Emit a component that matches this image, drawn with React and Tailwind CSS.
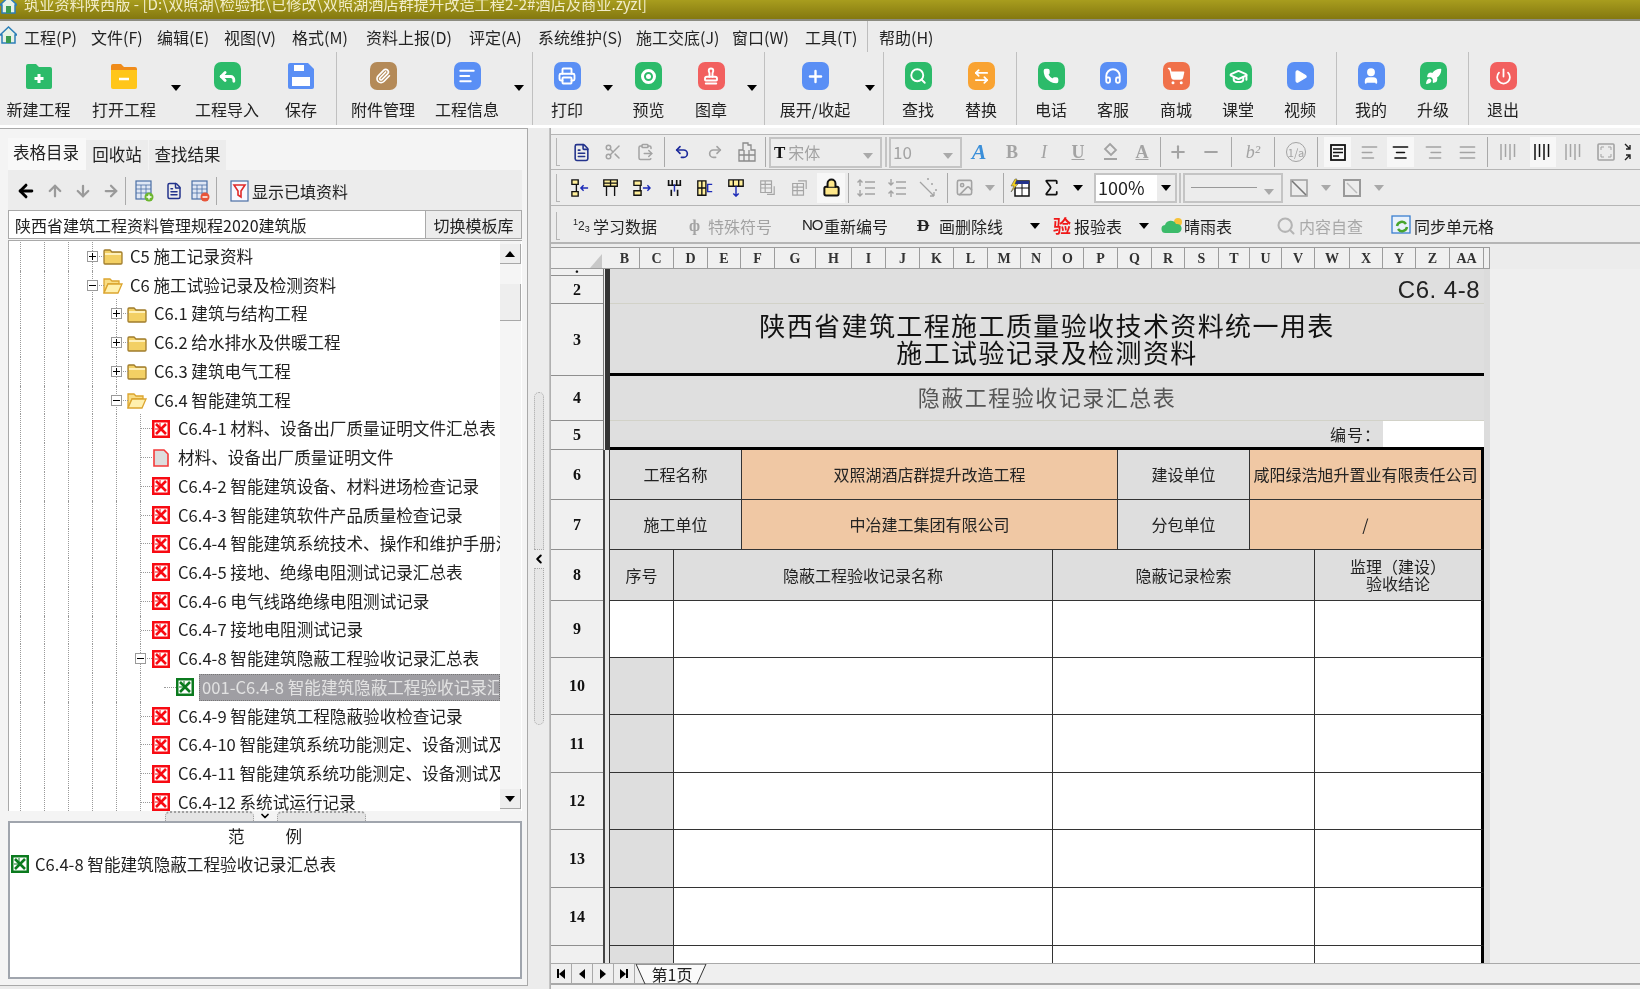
import React from "react";
import {
  ArrowLeftRight,
  ArrowDown,
  ArrowLeft,
  ArrowRight,
  ArrowUp,
  AlignJustify,
  ChevronDown,
  ChevronLeft,
  ClipboardPaste,
  FileText,
  GraduationCap,
  Headphones,
  Paperclip,
  Phone,
  Play,
  Plus,
  Power,
  Printer,
  Redo2,
  Reply,
  Rocket,
  Scissors,
  Search,
  ShoppingCart,
  Stamp,
  Undo2,
  User,
  Minus,
  AlignLeft,
  AlignCenter,
  AlignRight,
  Sigma,
  Lock,
  Image,
} from "lucide-react";

const Caret = ({ gray }) => (
  <span
    className={`inline-block border-x-[5px] border-t-[6px] border-x-transparent ${
      gray ? "border-t-[#a9a9a9]" : "border-t-black"
    }`}
  ></span>
);

const Tile = ({ color, children }) => (
  <div className={`w-[27px] h-[28px] rounded-[7px] flex items-center justify-center text-white ${color}`}>
    {children}
  </div>
);

const FolderTile = ({ top, body, children }) => (
  <svg width="28" height="28" viewBox="0 0 28 28">
    <path d="M1 4a2 2 0 0 1 2-2h8l3 3h11a2 2 0 0 1 2 2v4H1z" fill={top} />
    <path d="M1 8h26v17a2 2 0 0 1-2 2H3a2 2 0 0 1-2-2z" fill={body} />
    {children}
  </svg>
);

const Floppy = () => (
  <svg width="28" height="28" viewBox="0 0 28 28">
    <path d="M3 1h18l6 6v18a2 2 0 0 1-2 2H3a2 2 0 0 1-2-2V3a2 2 0 0 1 2-2z" fill="#5a8ff5" />
    <rect x="7" y="3" width="10" height="6" fill="#fff" />
    <rect x="5" y="15" width="18" height="9" fill="#fff" />
  </svg>
);

const mainTools = [
  { label: "新建工程", w: "w-[77px]", icon: <FolderTile top="#2cbb6a" body="#2cbb6a"><path d="M14 12v9M9.500 16.500h9" stroke="#fff" strokeWidth="3" /></FolderTile> },
  { label: "打开工程", w: "w-[94px]", icon: <FolderTile top="#f08c1a" body="#ffc61a"><path d="M9 17h10" stroke="#fff" strokeWidth="2.500" /></FolderTile> },
  { caret: "w-[10px]" },
  { label: "工程导入", w: "w-[92px]", icon: <Tile color="bg-[#2cbb6a]"><Reply size={19} strokeWidth={3.500} /></Tile> },
  { label: "保存", w: "w-[56px]", icon: <Floppy /> },
  { sep: "ml-[7px]" },
  { label: "附件管理", w: "w-[92px]", icon: <Tile color="bg-[#b48a58]"><Paperclip size={16} strokeWidth={2.500} /></Tile> },
  { label: "工程信息", w: "w-[76px]", icon: <Tile color="bg-[#5a8ff5]"><AlignLeft size={18} strokeWidth={2.500} /></Tile> },
  { caret: "w-[10px] ml-[9px]" },
  { sep: "ml-[8px]" },
  { label: "打印", w: "w-[68px]", icon: <Tile color="bg-[#5a8ff5]"><Printer size={18} strokeWidth={2.500} /></Tile> },
  { caret: "w-[14px]" },
  { label: "预览", w: "w-[67px]", icon: <Tile color="bg-[#2cbb6a]"><span className="w-[15px] h-[15px] rounded-full border-[3px] border-white flex items-center justify-center"><span className="w-[5px] h-[5px] rounded-full bg-white"></span></span></Tile> },
  { label: "图章", w: "w-[58px]", icon: <Tile color="bg-[#f2605f]"><Stamp size={18} strokeWidth={2.500} /></Tile> },
  { caret: "w-[24px]" },
  { sep: "" },
  { label: "展开/收起", w: "w-[100px]", icon: <Tile color="bg-[#5a8ff5]"><Plus size={19} strokeWidth={3} /></Tile> },
  { caret: "w-[10px]" },
  { sep: "ml-[8px]" },
  { label: "查找", w: "w-[68px]", icon: <Tile color="bg-[#2cbb6a]"><Search size={18} strokeWidth={2.500} /></Tile> },
  { label: "替换", w: "w-[58px]", icon: <Tile color="bg-[#f9a332]"><ArrowLeftRight size={17} strokeWidth={2.500} /></Tile> },
  { sep: "ml-[6px]" },
  { label: "电话", w: "w-[68px]", icon: <Tile color="bg-[#2cbb6a]"><Phone size={16} fill="#fff" strokeWidth={2} /></Tile> },
  { label: "客服", w: "w-[56px]", icon: <Tile color="bg-[#5a8ff5]"><Headphones size={18} strokeWidth={2.500} /></Tile> },
  { label: "商城", w: "w-[70px]", icon: <Tile color="bg-[#f0714a]"><ShoppingCart size={18} fill="#fff" strokeWidth={2} /></Tile> },
  { label: "课堂", w: "w-[54px]", icon: <Tile color="bg-[#2cbb6a]"><GraduationCap size={19} strokeWidth={2.500} /></Tile> },
  { label: "视频", w: "w-[70px]", icon: <Tile color="bg-[#5a8ff5]"><Play size={15} fill="#fff" strokeWidth={2} /></Tile> },
  { sep: "ml-[1px]" },
  { label: "我的", w: "w-[68px]", icon: <Tile color="bg-[#5a8ff5]"><User size={18} fill="#fff" strokeWidth={2.500} /></Tile> },
  { label: "升级", w: "w-[56px]", icon: <Tile color="bg-[#2cbb6a]"><Rocket size={17} fill="#fff" strokeWidth={2} /></Tile> },
  { sep: "ml-[7px]" },
  { label: "退出", w: "w-[68px]", icon: <Tile color="bg-[#f2605f]"><Power size={17} strokeWidth={2.500} /></Tile> },
];

const menus = [
  ["工程(P)", "w-[67px]"],
  ["文件(F)", "w-[66px]"],
  ["编辑(E)", "w-[67px]"],
  ["视图(V)", "w-[68px]"],
  ["格式(M)", "w-[74px]"],
  ["资料上报(D)", "w-[103px]"],
  ["评定(A)", "w-[69px]"],
  ["系统维护(S)", "w-[98px]"],
  ["施工交底(J)", "w-[96px]"],
  ["窗口(W)", "w-[73px]"],
  ["工具(T)", "w-[62px]"],
];

const House = () => (
  <svg width="17" height="18" viewBox="0 0 17 18">
    <path d="M8.500 1L0 9h2v8h13V9h2z" fill="#e8f2e6" stroke="#2c7fb8" strokeWidth="1.500" />
    <rect x="6" y="10" width="5" height="7" fill="#3a9a50" />
  </svg>
);

const TitleBar = () => (
  <div className="h-[21px] shrink-0 overflow-hidden border-b-2 border-[#8b8b80] bg-gradient-to-b from-[#a89d1e] to-[#84780f] flex items-start">
    <div className="w-[24px] -mt-[4px] shrink-0"><House /></div>
    <span className="-mt-[9px] text-[15.2px] leading-[24px] text-[#f1ecc8] whitespace-nowrap">
      筑业资料陕西版 - [D:\双照湖\检验批\已修改\双照湖酒店群提升改造工程2-2#酒店及商业.zyzl]
    </span>
  </div>
);

const MenuBar = () => (
  <div className="h-[31px] shrink-0 flex items-center bg-[#ececec] text-[16px] text-[#222]">
    <div className="w-[24px] shrink-0 -mt-[4px]"><House /></div>
    {menus.map(([t, w]) => (
      <div key={t} className={`${w} shrink-0 whitespace-nowrap`}>{t}</div>
    ))}
    <div className="w-px h-full bg-[#bdbdbd]"></div>
    <div className="ml-[11px] whitespace-nowrap">帮助(H)</div>
  </div>
);

const MainToolbar = () => (
  <div className="h-[73px] shrink-0 flex bg-[#ececec] text-[16px] text-[#222]">
    {mainTools.map((t, i) => {
      if (t.sep !== undefined) return <div key={i} className={`w-px h-full bg-[#c0c0c0] shrink-0 ${t.sep}`}></div>;
      if (t.caret) return <div key={i} className={`${t.caret} shrink-0 flex justify-center items-start pt-[33px]`}><Caret /></div>;
      return (
        <div key={i} className={`${t.w} shrink-0 flex flex-col items-center pt-[10px]`}>
          <div className="h-[28px] flex items-center">{t.icon}</div>
          <div className="mt-[9px] leading-[20px] whitespace-nowrap">{t.label}</div>
        </div>
      );
    })}
  </div>
);

/* small file icons of the tree */
const XlsIcon = ({ green }) => (
  <svg width="18" height="18" viewBox="0 0 18 18" className="shrink-0">
    <rect width="18" height="18" fill={green ? "#0b7a1e" : "#f80a12"} />
    <rect x="2.500" y="2.500" width="13" height="13" fill="#fff" />
    <path d="M4 4l10 10M14 4L4 14" stroke={green ? "#0b7a1e" : "#f80a12"} strokeWidth="2.600" />
    <path d="M3 9h5V3" fill="none" stroke={green ? "#0b7a1e" : "#f80a12"} strokeWidth="1" />
  </svg>
);

const PageIcon = () => (
  <svg width="18" height="18" viewBox="0 0 18 18" className="shrink-0">
    <path d="M2 1h10l4 4v12H2z" fill="#ddd" stroke="#f43a3a" strokeWidth="1.600" />
  </svg>
);

const Folder = ({ open }) =>
  open ? (
    <svg width="20" height="18" viewBox="0 0 20 18" className="shrink-0">
      <path d="M1 3h6l2 2h7v3H5L1 17z" fill="#f9de86" stroke="#dca52f" strokeWidth="1.300" />
      <path d="M5 8h14l-4 9H1z" fill="#fff0ae" stroke="#dca52f" strokeWidth="1.300" />
    </svg>
  ) : (
    <svg width="20" height="18" viewBox="0 0 20 18" className="shrink-0">
      <path d="M1 4a1 1 0 0 1 1-1h5l2 2h9a1 1 0 0 1 1 1v10a1 1 0 0 1-1 1H2a1 1 0 0 1-1-1z" fill="#f3d064" stroke="#a07c2c" strokeWidth="1.300" />
      <path d="M2 7h16" stroke="#fff4c4" strokeWidth="1.800" />
    </svg>
  );

const Expander = ({ plus }) => (
  <span className="absolute -left-[6px] top-[9px] w-[11px] h-[11px] border border-[#9a9a9a] bg-white flex items-center justify-center">
    <span className="w-[7px] h-px bg-black"></span>
    {plus && <span className="absolute w-px h-[7px] bg-black"></span>}
  </span>
);

const treeRows = [
  { d: 3, exp: "plus", type: "folder", text: "C5 施工记录资料" },
  { d: 3, exp: "minus", type: "open", text: "C6 施工试验记录及检测资料" },
  { d: 4, exp: "plus", type: "folder", text: "C6.1 建筑与结构工程" },
  { d: 4, exp: "plus", type: "folder", text: "C6.2 给水排水及供暖工程" },
  { d: 4, exp: "plus", type: "folder", text: "C6.3 建筑电气工程" },
  { d: 4, exp: "minus", type: "open", text: "C6.4 智能建筑工程" },
  { d: 5, type: "x", text: "C6.4-1 材料、设备出厂质量证明文件汇总表" },
  { d: 5, type: "page", text: "材料、设备出厂质量证明文件" },
  { d: 5, type: "x", text: "C6.4-2 智能建筑设备、材料进场检查记录" },
  { d: 5, type: "x", text: "C6.4-3 智能建筑软件产品质量检查记录" },
  { d: 5, type: "x", text: "C6.4-4 智能建筑系统技术、操作和维护手册汇总表" },
  { d: 5, type: "x", text: "C6.4-5 接地、绝缘电阻测试记录汇总表" },
  { d: 5, type: "x", text: "C6.4-6 电气线路绝缘电阻测试记录" },
  { d: 5, type: "x", text: "C6.4-7 接地电阻测试记录" },
  { d: 5, exp: "minus", type: "x", text: "C6.4-8 智能建筑隐蔽工程验收记录汇总表" },
  { d: 6, type: "g", text: "001-C6.4-8 智能建筑隐蔽工程验收记录汇总表", selected: true },
  { d: 5, type: "x", text: "C6.4-9 智能建筑工程隐蔽验收检查记录" },
  { d: 5, type: "x", text: "C6.4-10 智能建筑系统功能测定、设备测试及调试记录" },
  { d: 5, type: "x", text: "C6.4-11 智能建筑系统功能测定、设备测试及调试记录" },
  { d: 5, type: "x", text: "C6.4-12 系统试运行记录" },
];

const TreeRow = ({ row }) => {
  const guides = Array.from({ length: row.d });
  return (
    <div className="h-[28.74px] flex items-stretch whitespace-nowrap text-[16.6px] text-[#222]">
      {guides.map((_, i) => (
        <span key={i} className="w-[24px] shrink-0 border-l border-dotted border-[#9a9a9a]"></span>
      ))}
      <span className={`relative w-[12px] shrink-0 ${row.selected ? "" : "border-l border-dotted border-[#9a9a9a]"}`}>
        <span className="absolute left-0 right-0 top-[14px] border-t border-dotted border-[#9a9a9a]"></span>
        {row.exp && <Expander plus={row.exp === "plus"} />}
      </span>
      <span className="w-[18px] shrink-0 flex items-center justify-center">
        {row.type === "folder" && <Folder />}
        {row.type === "open" && <Folder open />}
        {row.type === "x" && <XlsIcon />}
        {row.type === "g" && <XlsIcon green />}
        {row.type === "page" && <PageIcon />}
      </span>
      {row.selected ? (
        <span className="ml-[5px] flex-1 my-[1px] pl-[2px] flex items-center overflow-hidden bg-[#9f9ea3] text-[#e2e2e2] border border-dotted border-[#777]">
          {row.text}
        </span>
      ) : (
        <span className="ml-[8px] flex items-center">{row.text}</span>
      )}
    </div>
  );
};

const ScrollBtn = ({ up, cls }) => (
  <div className={`h-[20px] bg-[#eeeeee] border-b border-r border-[#a8a8a8] flex items-center justify-center ${cls}`}>
    <span className={`border-x-[5px] border-x-transparent ${up ? "border-b-[6px] border-b-black" : "border-t-[6px] border-t-black"}`}></span>
  </div>
);

const LeftToolIcon = ({ red, green }) => (
  <svg width="19" height="22" viewBox="0 0 19 22">
    <rect x="1" y="1" width="15" height="18" fill="#dfe7f4" stroke="#4a6fa5" strokeWidth="1.200" />
    <path d="M1 5h15M1 9h15M1 13h15M6 5v14M11 5v14" stroke="#4a6fa5" strokeWidth="0.800" />
    {green && <circle cx="14" cy="17" r="4.500" fill="#6cb62f" />}
    {green && <path d="M14 14.500v5M11.500 17h5" stroke="#fff" strokeWidth="1.300" />}
    {red && <circle cx="14" cy="17" r="4.500" fill="#e8553a" />}
    {red && <path d="M11.500 17h5" stroke="#fff" strokeWidth="1.500" />}
  </svg>
);

const LeftPanel = () => (
  <div className="w-[528px] shrink-0 h-[858px] border-t border-r border-b border-[#a9a9a9] bg-[#f4f4f4] pl-[8px] pr-[5px] pt-[9px] flex flex-col">
    {/* tabs */}
    <div className="h-[32px] flex items-stretch text-[16.5px] text-[#222] shrink-0">
      <div className="w-[78px] pb-[3px] pr-[2px] bg-[#f8f8f8] flex items-center justify-center">表格目录</div>
      <div className="w-[62px] mt-[2px] pb-[1px] bg-[#ececec] flex items-center justify-center">回收站</div>
      <div className="w-[77px] mt-[2px] pb-[1px] ml-px bg-[#ececec] flex items-center justify-center">查找结果</div>
    </div>
    {/* tree toolbar */}
    <div className="h-[40px] pt-[2px] bg-[#ececec] flex items-center text-[16px] text-[#222] shrink-0">
      <ArrowLeft size={20} strokeWidth={3.500} className="ml-[8px] text-black" />
      <ArrowUp size={18} strokeWidth={3} className="ml-[10px] text-[#9a9a9a]" />
      <ArrowDown size={18} strokeWidth={3} className="ml-[10px] text-[#9a9a9a]" />
      <ArrowRight size={18} strokeWidth={3} className="ml-[10px] text-[#9a9a9a]" />
      <div className="w-px h-[28px] bg-[#aaa] ml-[5px]"></div>
      <div className="ml-[9px]"><LeftToolIcon green /></div>
      <FileText size={18} className="ml-[11px] text-[#23338c]" />
      <div className="ml-[8px]"><LeftToolIcon red /></div>
      <div className="w-px h-[28px] bg-[#aaa] ml-[6px]"></div>
      <svg width="19" height="22" viewBox="0 0 19 22" className="ml-[13px]">
        <rect x="1" y="1" width="17" height="20" fill="#f8f8ff" stroke="#4a6fa5" strokeWidth="1.200" />
        <path d="M4 5h11l-4 6v6l-3-2v-4z" fill="none" stroke="#e02a2a" strokeWidth="1.600" />
      </svg>
      <span className="ml-[3px] whitespace-nowrap">显示已填资料</span>
    </div>
    {/* template combo */}
    <div className="h-[29px] flex border border-[#a9a9a9] text-[16px] text-[#222] shrink-0">
      <div className="w-[416px] bg-white pl-[6px] flex items-center whitespace-nowrap">陕西省建筑工程资料管理规程2020建筑版</div>
      <div className="flex-1 bg-[#ececec] border-l border-[#a9a9a9] flex items-center justify-center whitespace-nowrap">切换模板库</div>
    </div>
    {/* tree */}
    <div className="h-[571px] mt-px flex border-l border-t border-[#a9a9a9] bg-white shrink-0">
      <div className="w-[491px] pl-[11px] pt-[1px] overflow-hidden">
        {treeRows.map((r) => (
          <TreeRow key={r.text} row={r} />
        ))}
      </div>
      <div className="w-[21px] bg-[#f5f5f5] flex flex-col">
        <ScrollBtn up cls="mt-[3px]" />
        <div className="h-[37px] mt-[20px] bg-[#eeeeee] border-b border-r border-[#a8a8a8]"></div>
        <div className="flex-1"></div>
        <ScrollBtn cls="mb-[2px]" />
      </div>
    </div>
    {/* horizontal splitter */}
    <div className="h-[10px] flex justify-center shrink-0">
      <div className="w-[201px] flex">
        <div className="flex-1 rounded-t-[5px] border-t-2 border-x border-[#a0a0a0] border-dotted bg-[#e4e4e4]"></div>
        <div className="w-[23px] flex items-center justify-center bg-[#f4f4f4]"><ChevronDown size={12} strokeWidth={3.500} className="text-black" /></div>
        <div className="flex-1 rounded-t-[5px] border-t-2 border-x border-[#a0a0a0] border-dotted bg-[#e4e4e4]"></div>
      </div>
    </div>
    {/* sample box */}
    <div className="h-[158px] border-2 border-[#a0a5ad] bg-white text-[16.6px] text-[#222] shrink-0">
      <div className="h-[27px] flex items-center justify-center gap-[41px]">
        <span>范</span>
        <span>例</span>
      </div>
      <div className="h-[28px] flex items-center pl-[1px]">
        <XlsIcon green />
        <span className="ml-[6px] whitespace-nowrap">C6.4-8 智能建筑隐蔽工程验收记录汇总表</span>
      </div>
    </div>
  </div>
);

const VSplitter = () => (
  <div className="w-[22px] shrink-0 h-full flex flex-col items-center bg-[#ececec] border-r border-[#c4c4c4]">
    <div className="h-[264px]"></div>
    <div className="h-[158px] w-[10px] rounded-t-[5px] border border-dotted border-[#a8a8a8] bg-[#e6e6e6]"></div>
    <ChevronLeft size={14} strokeWidth={3.500} className="my-[2px] text-black" />
    <div className="h-[157px] w-[10px] rounded-b-[5px] border border-dotted border-[#a8a8a8] bg-[#e6e6e6]"></div>
  </div>
);

const Handle = () => (
  <div className="w-[14px] shrink-0 h-full flex items-center justify-end pr-[5px]">
    <div className="w-[4px] h-[28px] border-l border-b border-[#b5b5b5]"></div>
  </div>
);

const Sep = ({ cls }) => <div className={`w-px h-[30px] bg-[#a9a9a9] shrink-0 ${cls}`}></div>;

const T = ({ w, active, children }) => (
  <div className={`${w} shrink-0 h-[30px] flex items-center justify-center ${active ? "bg-[#f7f7f7]" : ""}`}>{children}</div>
);

const GrayText = ({ cls, children }) => <span className={`font-['Liberation_Serif',serif] text-[#a3a3a3] text-[18px] leading-none ${cls}`}>{children}</span>;

/* merge / split glyphs of the second toolbar row */
const MergeIcon = ({ kind, gray }) => {
  const line = gray ? "#a5a5a5" : "#111";
  const fill = gray ? "#efefef" : "#ffef9a";
  const arrow = gray ? "#a5a5a5" : "#1d2bb8";
  return (
    <svg width="18" height="18" viewBox="0 0 20 20">
      {kind === 0 && <path d="M1 1h7v5H1zM1 14h7v5H1zM6 6v8" fill={fill} stroke={line} strokeWidth="1.500" />}
      {kind === 0 && <path d="M19 10h-8m3-3l-3 3 3 3" fill="none" stroke={arrow} strokeWidth="1.600" />}
      {kind === 1 && <path d="M2 1h15v7H2zM2 4.500h15M9.500 1v7M5 8v11M14 8v11" fill={fill} stroke={line} strokeWidth="1.500" />}
      {kind === 2 && <path d="M1 2h8v5H1zM1 13h8v5H1zM8 7v6" fill={fill} stroke={line} strokeWidth="1.500" />}
      {kind === 2 && <path d="M11 10h8m-3-3l3 3-3 3" fill="none" stroke={arrow} strokeWidth="1.600" />}
      {kind === 3 && <path d="M4 1v6M8 1v6M13 1v6M17 1v6M3 7h15M7 12v7M14 12v7" fill="none" stroke={line} strokeWidth="1.800" />}
      {kind === 3 && <path d="M10.500 6v8" stroke={arrow} strokeWidth="1.600" />}
      {kind === 4 && <path d="M2 2h9v16H2zM6.500 2v16M2 10h9" fill={fill} stroke={line} strokeWidth="1.500" />}
      {kind === 4 && <path d="M18 6h-5v8h5" fill="none" stroke={arrow} strokeWidth="1.500" />}
      {kind === 5 && <path d="M2 1h16v7H2zM7 1v7M13 1v7" fill={fill} stroke={line} strokeWidth="1.500" />}
      {kind === 5 && <path d="M10 8v11m-3-3l3 3 3-3" fill="none" stroke={arrow} strokeWidth="1.600" />}
      {kind === 6 && <path d="M3 2h12v13H3zM3 6h12M3 10h12M8 2v13M18 8v9h-8" fill="none" stroke={line} strokeWidth="1.300" />}
      {kind === 7 && <path d="M3 5h12v13H3zM3 9h12M3 13h12M8 5v13M9 2h9v9" fill="none" stroke={line} strokeWidth="1.300" />}
    </svg>
  );
};

/* row-height glyphs: three lines with an arrow beside them */
const SpacingIcon = ({ wide }) => (
  <svg width="20" height="20" viewBox="0 0 20 20">
    <path d={wide ? "M4 2v6M4 12v6M1.500 4.500L4 2l2.500 2.500M1.500 15.500L4 18l2.500-2.500" : "M4 1v6M4 13v6M1.500 4.500L4 7l2.500-2.500M1.500 15.500L4 13l2.500 2.500"} fill="none" stroke="#a3a3a3" strokeWidth="1.400" />
    <path d="M9 4h10M9 10h10M9 16h10" stroke="#a3a3a3" strokeWidth="1.600" />
  </svg>
);

const Bars = ({ dark, cls }) => (
  <svg width="20" height="20" viewBox="0 0 20 20" className={cls}>
    <path d="M2 2v16M6.500 2v13M11 2v16M15.500 2v13" stroke={dark ? "#111" : "#a5a5a5"} strokeWidth="1.500" />
  </svg>
);

const Row1 = () => (
  <div className="h-[36px] flex items-center border-t border-b border-[#b5b5b5] bg-[#ececec] shrink-0">
    <Handle />
    <T w="w-[32px]"><FileText size={19} className="text-[#23338c]" /></T>
    <T w="w-[32px]"><Scissors size={18} className="text-[#a3a3a3]" /></T>
    <T w="w-[32px]"><ClipboardPaste size={18} className="text-[#a3a3a3]" /></T>
    <Sep cls="ml-[3px]" />
    <T w="w-[34px]"><Undo2 size={16} strokeWidth={2.500} className="text-[#1d2b9c]" /></T>
    <T w="w-[32px]"><Redo2 size={16} strokeWidth={2.500} className="text-[#a3a3a3]" /></T>
    <T w="w-[32px]"><svg width="18" height="20" viewBox="0 0 18 20"><path d="M5 8V1h5v2h3v5h4v11H1V8zM1 13h16M6 8v11M11 8v11" fill="none" stroke="#8a8a8a" strokeWidth="1.300" /></svg></T>
    <Sep cls="ml-[2px]" />
    <div className="ml-[3px] w-[113px] h-[31px] shrink-0 border-2 border-[#c4c4c4] flex items-center pl-[3px] text-[16px] text-[#a3a3a3]">
      <span className="font-['Liberation_Serif',serif] font-bold text-[#111] text-[17px] leading-none">T</span>
      <span className="ml-[3px] flex-1">宋体</span>
      <span className="mr-[7px]"><Caret gray /></span>
    </div>
    <div className="ml-[3px] w-[2px] h-[30px] bg-[#c4c4c4] shrink-0"></div>
    <div className="ml-[2px] w-[73px] h-[31px] shrink-0 border-2 border-[#c4c4c4] flex items-center pl-[2px] text-[17px] text-[#a3a3a3]">
      <span className="flex-1">10</span>
      <span className="mr-[7px]"><Caret gray /></span>
    </div>
    <T w="w-[34px]"><span className="font-['Liberation_Serif',serif] font-bold italic text-[#3b8fd9] text-[22px] leading-none">A</span></T>
    <T w="w-[32px]"><GrayText cls="font-bold">B</GrayText></T>
    <T w="w-[32px]"><GrayText cls="italic">I</GrayText></T>
    <T w="w-[36px]"><GrayText cls="underline font-bold">U</GrayText></T>
    <T w="w-[30px]"><svg width="18" height="20" viewBox="0 0 18 20"><path d="M8 2l6 6-5 5-6-6zM2 17h13" fill="none" stroke="#a3a3a3" strokeWidth="1.800" /></svg></T>
    <T w="w-[32px]"><GrayText cls="underline font-bold">A</GrayText></T>
    <Sep cls="ml-[2px]" />
    <T w="w-[34px]"><Plus size={20} strokeWidth={2.500} className="text-[#a3a3a3]" /></T>
    <T w="w-[32px]"><Minus size={20} strokeWidth={2.500} className="text-[#a3a3a3]" /></T>
    <Sep cls="ml-[4px]" />
    <T w="w-[42px]"><GrayText cls="italic">b²</GrayText></T>
    <Sep />
    <T w="w-[42px]"><span className="w-[20px] h-[20px] rounded-full border border-[#a3a3a3] text-[#a3a3a3] text-[11px] leading-[18px] text-center">1/a</span></T>
    <Sep />
    <div className="ml-[6px]"><T w="w-[27px]" active><svg width="16" height="17" viewBox="0 0 16 17"><rect x="1" y="1" width="14" height="15" fill="none" stroke="#111" strokeWidth="1.800" /><path d="M3 5h10M3 8.500h10M3 12h6" stroke="#111" strokeWidth="1.500" /></svg></T></div>
    <T w="w-[36px]"><AlignLeft size={19} className="text-[#a3a3a3]" /></T>
    <T w="w-[27px]" active><AlignCenter size={19} className="text-[#111]" /></T>
    <T w="w-[38px]"><AlignRight size={19} className="text-[#a3a3a3]" /></T>
    <T w="w-[30px]"><AlignJustify size={19} className="text-[#a3a3a3]" /></T>
    <Sep cls="ml-[5px]" />
    <T w="w-[42px]"><Bars /></T>
    <T w="w-[26px]" active><Bars dark /></T>
    <T w="w-[36px]"><Bars /></T>
    <T w="w-[28px]"><svg width="18" height="18" viewBox="0 0 18 18"><rect x="1" y="1" width="16" height="16" rx="1" fill="none" stroke="#a3a3a3" strokeWidth="1.600" /><path d="M4 7V4h3M14 7V4h-3M4 11v3h3M14 11v3h-3" fill="none" stroke="#a3a3a3" /></svg></T>
    <T w="w-[20px]"><svg width="14" height="18" viewBox="0 0 14 18"><path d="M2 1l5 5M7 2v4H3M2 17l5-5M7 16v-4H3" fill="none" stroke="#222" strokeWidth="1.400" /></svg></T>
  </div>
);

const Row2 = () => (
  <div className="h-[36px] flex items-center border-b border-[#b5b5b5] bg-[#ececec] shrink-0">
    <Handle />
    <T w="w-[30px]"><MergeIcon kind={0} /></T>
    <T w="w-[32px]"><MergeIcon kind={1} /></T>
    <T w="w-[30px]"><MergeIcon kind={2} /></T>
    <T w="w-[34px]"><MergeIcon kind={3} /></T>
    <T w="w-[28px]"><MergeIcon kind={4} /></T>
    <T w="w-[34px]"><MergeIcon kind={5} /></T>
    <T w="w-[28px]"><MergeIcon kind={6} gray /></T>
    <T w="w-[36px]"><MergeIcon kind={7} gray /></T>
    <T w="w-[28px]" active><Lock size={19} strokeWidth={2.500} fill="#ffe88a" className="text-[#111]" /></T>
    <Sep cls="ml-[3px]" />
    <T w="w-[34px]"><SpacingIcon wide /></T>
    <T w="w-[28px]"><SpacingIcon /></T>
    <T w="w-[34px]"><svg width="20" height="20" viewBox="0 0 20 20"><path d="M2 4l14 14M16 18v-4M16 18h-4" fill="none" stroke="#a3a3a3" strokeWidth="1.300" /><path d="M9 1h2M13 6h2M17 12h2" stroke="#a3a3a3" strokeWidth="1.500" /></svg></T>
    <Sep cls="ml-[2px]" />
    <T w="w-[32px]"><Image size={19} className="text-[#a3a3a3]" /></T>
    <T w="w-[20px]"><Caret gray /></T>
    <Sep cls="ml-[3px]" />
    <T w="w-[32px]"><svg width="22" height="20" viewBox="0 0 22 20"><rect x="6" y="3" width="14" height="15" fill="#fff" stroke="#111" strokeWidth="1.500" /><path d="M6 3h14v3H6z" fill="#23338c" /><path d="M6 10h14M13 6v12" stroke="#111" /><path d="M6 1L2 8h3l-3 6 7-8H6l2-5z" fill="#f4d21f" stroke="#444" strokeWidth="0.500" /></svg></T>
    <T w="w-[30px]"><Sigma size={21} strokeWidth={2} className="text-[#111]" /></T>
    <T w="w-[24px]"><Caret /></T>
    <div className="ml-[4px] w-[83px] h-[30px] shrink-0 border-2 border-[#c4c4c4] flex items-center bg-white text-[18px] text-[#222]">
      <span className="w-[61px] pl-[2px]">100%</span>
      <span className="flex-1 h-full bg-[#ececec] flex items-center justify-center"><Caret /></span>
    </div>
    <div className="ml-[2px] w-[2px] h-[30px] bg-[#c4c4c4] shrink-0"></div>
    <div className="ml-[2px] w-[100px] h-[30px] shrink-0 border-2 border-[#c4c4c4] flex items-center pl-[6px]">
      <span className="w-[66px] h-px bg-[#999]"></span>
      <span className="ml-[7px]"><Caret gray /></span>
    </div>
    <T w="w-[32px]"><svg width="18" height="18" viewBox="0 0 18 18"><rect x="1" y="1" width="16" height="16" fill="none" stroke="#a3a3a3" strokeWidth="1.600" /><path d="M2 2l14 14" stroke="#777" strokeWidth="1.600" /></svg></T>
    <T w="w-[22px]"><Caret gray /></T>
    <T w="w-[30px]"><svg width="18" height="18" viewBox="0 0 18 18"><rect x="1" y="1" width="16" height="16" fill="none" stroke="#999" strokeWidth="2" /><path d="M4 4l10 10" stroke="#bbb" strokeWidth="1.500" /></svg></T>
    <T w="w-[24px]"><Caret gray /></T>
  </div>
);

const Row3 = () => (
  <div className="h-[38px] pt-[3px] flex items-center border-b-2 border-[#b5b5b5] bg-[#ececec] text-[16px] text-[#222] whitespace-nowrap shrink-0">
    <Handle />
    <div className="ml-[8px] w-[88px] shrink-0 flex items-center">
      <span className="w-[20px] text-[12px] font-['Liberation_Sans',sans-serif]"><sup>1</sup>2<sub>3</sub></span>
      学习数据
    </div>
    <div className="ml-[28px] w-[84px] shrink-0 flex items-center text-[#a3a3a3]">
      <span className="w-[19px] text-[16px] font-bold font-['Liberation_Serif',serif]">ф</span>
      特殊符号
    </div>
    <div className="ml-[29px] w-[90px] shrink-0 flex items-center">
      <span className="w-[22px] text-[15px] tracking-[-1px] font-['Liberation_Sans',sans-serif]">NO</span>
      重新编号
    </div>
    <div className="ml-[25px] w-[90px] shrink-0 flex items-center">
      <span className="w-[22px] text-[17px] line-through font-bold font-['Liberation_Serif',serif]">D</span>
      画删除线
    </div>
    <div className="ml-[22px] w-[12px] shrink-0 flex justify-center"><Caret /></div>
    <div className="ml-[12px] w-[72px] shrink-0 flex items-center">
      <span className="w-[21px] text-[18px] font-bold text-[#f01818]">验</span>
      报验表
    </div>
    <div className="ml-[13px] w-[12px] shrink-0 flex justify-center"><Caret /></div>
    <div className="ml-[11px] w-[73px] shrink-0 flex items-center">
      <svg width="22" height="18" viewBox="0 0 22 18" className="mr-px">
        <circle cx="17" cy="5" r="4" fill="#f6c23a" />
        <path d="M5 16a4 4 0 0 1-1-8 6 6 0 0 1 11-1 4.500 4.500 0 0 1 2 9z" fill="#3cbb6a" />
      </svg>
      晴雨表
    </div>
    <div className="ml-[42px] w-[90px] shrink-0 flex items-center text-[#a9a9a9]">
      <Search size={20} strokeWidth={2.500} className="mr-[3px] text-[#b4b4b4]" />
      内容自查
    </div>
    <div className="ml-[25px] w-[105px] shrink-0 flex items-center">
      <svg width="21" height="21" viewBox="0 0 21 21" className="mr-[2px]">
        <rect x="1" y="1" width="18" height="17" fill="#e8f1fb" stroke="#3a7fd0" strokeWidth="1.300" />
        <path d="M6 11a5 5 0 0 1 9-2M16 12a5 5 0 0 1-9 2" fill="none" stroke="#47a52d" strokeWidth="2.500" />
      </svg>
      同步单元格
    </div>
  </div>
);

const columns = [
  ["B", "w-[30px]"], ["C", "w-[34px]"], ["D", "w-[34px]"], ["E", "w-[33px]"], ["F", "w-[34px]"],
  ["G", "w-[41px]"], ["H", "w-[36px]"], ["I", "w-[34px]"], ["J", "w-[34px]"], ["K", "w-[34px]"],
  ["L", "w-[34px]"], ["M", "w-[33px]"], ["N", "w-[31px]"], ["O", "w-[32px]"], ["P", "w-[34px]"],
  ["Q", "w-[34px]"], ["R", "w-[33px]"], ["S", "w-[34px]"], ["T", "w-[31px]"], ["U", "w-[32px]"],
  ["V", "w-[33px]"], ["W", "w-[35px]"], ["X", "w-[33px]"], ["Y", "w-[33px]"], ["Z", "w-[34px]"],
  ["AA", "w-[34px]"],
];

const ColHeader = () => (
  <div className="h-[25px] pt-[3px] flex bg-[#ececec] shrink-0">
    <div className="w-[59px] h-[22px] shrink-0 border-t border-b border-[#9c9c9c] bg-[#f0f0f0] flex justify-end">
      <svg width="16" height="20" viewBox="0 0 16 20" className="mr-[6px]">
        <path d="M14 6L2 20h12z" fill="#c8c8c8" />
      </svg>
    </div>
    {columns.map(([c, w]) => (
      <div key={c} className={`${w} h-[22px] shrink-0 border-t border-b border-r border-[#9c9c9c] bg-[#f0f0f0] flex items-center justify-center font-['Liberation_Serif',serif] font-bold text-[14px] text-[#333]`}>
        {c}
      </div>
    ))}
    <div className="w-[6px] h-[22px] shrink-0 border-t border-b border-r border-[#9c9c9c] bg-[#f0f0f0]"></div>
  </div>
);

const SheetRow = ({ n, h, upper, children }) => (
  <div className={`${h} flex w-[939px] shrink-0`}>
    <div className="w-[52px] shrink-0 bg-[#f0f0f0] border-b border-[#8f8f8f] flex items-center justify-center font-['Liberation_Serif',serif] font-bold text-[16px] text-[#111]">
      {n}
    </div>
    {upper ? (
      <div className="w-[7px] shrink-0 flex">
        <div className="w-[1px] bg-[#777]"></div>
        <div className="w-[1px] bg-[#ececec]"></div>
        <div className="w-[5px] bg-[#333]"></div>
      </div>
    ) : (
      <div className="w-[7px] shrink-0 border-l-2 border-r border-l-[#444] border-r-[#333] bg-[#e6e6e6]"></div>
    )}
    <div className="w-[874px] shrink-0 flex">{children}</div>
    <div className="w-[6px] shrink-0 bg-[#dcdcdc]"></div>
  </div>
);

const Cell = ({ w, bg, last, children }) => (
  <div className={`${w} shrink-0 h-full flex items-center justify-center text-center text-[16px] leading-[17px] text-[#222] border-b border-[#333] ${bg} ${last ? "border-r-[3px] border-r-black" : "border-r border-r-[#333]"}`}>
    {children}
  </div>
);

const emptyRows = [
  ["9", "h-[57px]", "bg-white"],
  ["10", "h-[57px]", "bg-[#dedede]"],
  ["11", "h-[58px]", "bg-[#dedede]"],
  ["12", "h-[57px]", "bg-[#dedede]"],
  ["13", "h-[58px]", "bg-[#dedede]"],
  ["14", "h-[58px]", "bg-[#dedede]"],
  ["", "h-[18px]", "bg-[#dedede]"],
];

const Sheet = () => (
  <div className="h-[694px] overflow-hidden flex flex-col bg-[#efefef] shrink-0">
    <SheetRow n="·" h="h-[7px]" upper><div className="w-full bg-[#dfdfdf]"></div></SheetRow>
    <SheetRow n="2" h="h-[28px]" upper>
      <div className="w-full bg-[#dfdfdf] border-b border-[#d2d2c8] flex items-center justify-end pr-[4px] text-[24px] leading-none text-[#222] font-['Liberation_Sans',sans-serif] tracking-[0.5px]">
        C6. 4-8
      </div>
    </SheetRow>
    <SheetRow n="3" h="h-[72px]" upper>
      <div className="w-full bg-[#dfdfdf] border-b-[3px] border-black flex flex-col items-center justify-center text-[26px] leading-[27px] tracking-[1.4px] text-[#111] pb-[2px]">
        <div>陕西省建筑工程施工质量验收技术资料统一用表</div>
        <div>施工试验记录及检测资料</div>
      </div>
    </SheetRow>
    <SheetRow n="4" h="h-[45px]" upper>
      <div className="w-full bg-[#dfdfdf] border-b border-[#d2d2c8] pb-[3px] flex items-center justify-center text-[22px] tracking-[1.500px] text-[#555]">
        隐蔽工程验收记录汇总表
      </div>
    </SheetRow>
    <SheetRow n="5" h="h-[29px]" upper>
      <div className="w-full flex bg-[#dfdfdf] border-b-[3px] border-black text-[16px] text-[#222]">
        <div className="flex-1 flex items-center justify-end pr-[2px] tracking-[1px]">编号：</div>
        <div className="w-[101px] bg-white"></div>
      </div>
    </SheetRow>
    <SheetRow n="6" h="h-[50px]">
      <Cell w="w-[132px]" bg="bg-[#dedede]">工程名称</Cell>
      <Cell w="w-[376px]" bg="bg-[#f0c8a4]">双照湖酒店群提升改造工程</Cell>
      <Cell w="w-[132px]" bg="bg-[#dedede]">建设单位</Cell>
      <Cell w="w-[234px]" bg="bg-[#f0c8a4]" last>咸阳绿浩旭升置业有限责任公司</Cell>
    </SheetRow>
    <SheetRow n="7" h="h-[50px]">
      <Cell w="w-[132px]" bg="bg-[#dedede]">施工单位</Cell>
      <Cell w="w-[376px]" bg="bg-[#f0c8a4]">中冶建工集团有限公司</Cell>
      <Cell w="w-[132px]" bg="bg-[#dedede]">分包单位</Cell>
      <Cell w="w-[234px]" bg="bg-[#f0c8a4]" last>/</Cell>
    </SheetRow>
    <SheetRow n="8" h="h-[51px]">
      <Cell w="w-[64px]" bg="bg-[#dedede]">序号</Cell>
      <Cell w="w-[379px]" bg="bg-[#dedede]">隐蔽工程验收记录名称</Cell>
      <Cell w="w-[262px]" bg="bg-[#dedede]">隐蔽记录检索</Cell>
      <Cell w="w-[169px]" bg="bg-[#dedede]" last>
        <div>监理（建设）<br />验收结论</div>
      </Cell>
    </SheetRow>
    {emptyRows.map(([n, h, first]) => (
      <SheetRow key={h + n} n={n} h={h}>
        <Cell w="w-[64px]" bg={first} />
        <Cell w="w-[379px]" bg="bg-white" />
        <Cell w="w-[262px]" bg="bg-white" />
        <Cell w="w-[169px]" bg="bg-white" last />
      </SheetRow>
    ))}
  </div>
);

const NavBtn = ({ children }) => (
  <div className="w-[21px] h-full border-r border-[#a9a9a9] flex items-center justify-center text-[#222]">{children}</div>
);

const TabBar = () => (
  <div className="h-[22px] flex border-t border-b-2 border-[#a9a9a9] bg-[#efefef] shrink-0">
    <NavBtn><span className="w-[2px] h-[9px] bg-black"></span><span className="border-y-[5px] border-r-[6px] border-y-transparent border-r-black"></span></NavBtn>
    <NavBtn><span className="border-y-[5px] border-r-[6px] border-y-transparent border-r-black"></span></NavBtn>
    <NavBtn><span className="border-y-[5px] border-l-[6px] border-y-transparent border-l-black"></span></NavBtn>
    <NavBtn><span className="border-y-[5px] border-l-[6px] border-y-transparent border-l-black"></span><span className="w-[2px] h-[9px] bg-black"></span></NavBtn>
    <div className="relative w-[74px] h-full flex items-center justify-center text-[16px] text-[#222]">
      <svg width="74" height="20" viewBox="0 0 74 20" className="absolute inset-0">
        <path d="M1 0l9 20h52L71 0z" fill="#fafafa" stroke="#333" strokeWidth="1" />
      </svg>
      <span className="relative">第1页</span>
    </div>
  </div>
);

const RightPanel = () => (
  <div className="flex-1 h-full flex flex-col pt-[6px] bg-[#f4f4f4] border-l border-[#b0b0b0]">
    <Row1 />
    <Row2 />
    <Row3 />
    <ColHeader />
    <Sheet />
    <TabBar />
  </div>
);

export default function App() {
  return (
    <div className="w-[1640px] h-[989px] overflow-hidden flex flex-col bg-[#ececec] blur-[0.35px] font-['Noto_Sans_CJK_SC','Liberation_Sans',sans-serif]">
      <TitleBar />
      <MenuBar />
      <MainToolbar />
      <div className="h-[3px] bg-white shrink-0"></div>
      <div className="flex-1 flex min-h-0">
        <LeftPanel />
        <VSplitter />
        <RightPanel />
      </div>
    </div>
  );
}
